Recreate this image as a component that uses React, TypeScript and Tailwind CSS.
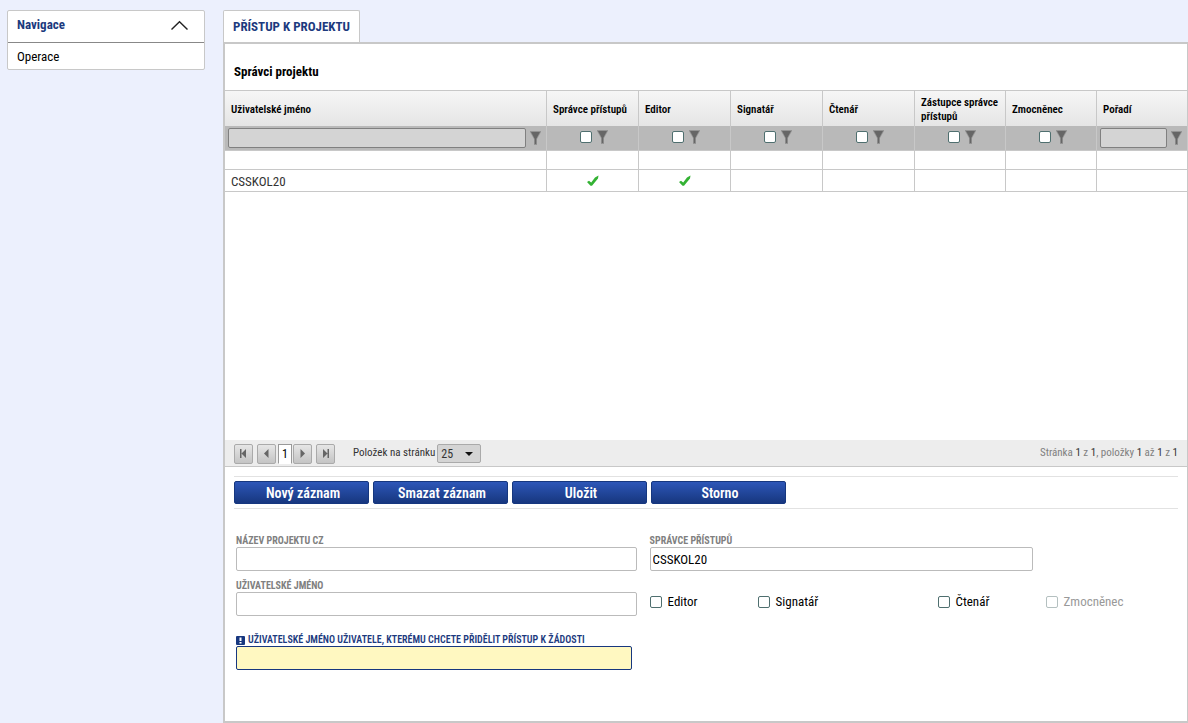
import type { ReactNode } from 'react'
import { clsx } from 'clsx'

interface Column {
  label: string
  width: string
  filter: 'text' | 'checkbox'
}

const columns: Column[] = [
  { label: 'Uživatelské jméno', width: '', filter: 'text' },
  { label: 'Správce přístupů', width: 'w-[92px]', filter: 'checkbox' },
  { label: 'Editor', width: 'w-[92px]', filter: 'checkbox' },
  { label: 'Signatář', width: 'w-[92px]', filter: 'checkbox' },
  { label: 'Čtenář', width: 'w-[92px]', filter: 'checkbox' },
  { label: 'Zástupce správce přístupů', width: 'w-[91px]', filter: 'checkbox' },
  { label: 'Zmocněnec', width: 'w-[91px]', filter: 'checkbox' },
  { label: 'Pořadí', width: 'w-[90px]', filter: 'text' },
]

const actions = ['Nový záznam', 'Smazat záznam', 'Uložit', 'Storno']

const checkboxClass =
  'block size-3 shrink-0 appearance-none rounded-[2px] border border-[#4f6f6f] bg-white checked:bg-[#1c3f94] disabled:border-[#b4c0c0]'

const fieldClass = 'block h-6 rounded-[2px] border border-[#bbb] bg-white px-[2px] text-[13px] text-black'

const labelClass = 'block text-[10px] leading-3 font-bold uppercase text-[#808080]'

function FunnelIcon() {
  return (
    <svg width="11" height="14" viewBox="0 0 11 14" aria-hidden="true">
      <path d="M0 0h11v1L7 8v6H4V8L0 1z" fill="#949494" />
      <path d="M1 1h9L6.200 8V13H4.800V8z" fill="#666" />
    </svg>
  )
}

function CheckIcon() {
  return (
    <svg width="12" height="12" viewBox="0 0 12 12" className="mx-auto" role="img" aria-label="Ano">
      <path d="M0 7L2 5.800L4.200 7.500L8 2.500L11.500 0.500L11 3.500L5 10.800H3.500z" fill="#33b233" />
    </svg>
  )
}

function PagerButton({ label, children }: { label: string; children: ReactNode }) {
  return (
    <button
      type="button"
      aria-label={label}
      className="flex h-5 w-[19px] items-center justify-center rounded-[2px] border border-[#aaa] bg-linear-to-b from-[#e6e6e6] to-[#c4c4c4]"
    >
      <svg width="9" height="9" viewBox="0 0 9 9" fill="#666" aria-hidden="true">
        {children}
      </svg>
    </button>
  )
}

function CheckField({ label, className, disabled }: { label: string; className?: string; disabled?: boolean }) {
  return (
    <label className={clsx('flex items-center gap-1.5 text-[13px]', disabled && 'text-[#999]', className)}>
      <input type="checkbox" disabled={disabled} className={checkboxClass} />
      {label}
    </label>
  )
}

function Sidebar() {
  return (
    <nav className="mt-2.5 ml-[7px] w-[198px] shrink-0 self-start rounded-[2px] border border-[#c8c8c8] bg-white text-[13px]">
      <button
        type="button"
        className="flex h-8 w-full items-center justify-between border-b border-[#888] pr-4 pb-1 pl-[9px] font-bold text-[#1c3a7e]"
      >
        Navigace
        <svg width="17" height="10" viewBox="0 0 17 10" fill="none" stroke="#222" strokeWidth="1.4" aria-hidden="true">
          <path d="M0.500 9.500L8.500 1.800L16.500 9.500" />
        </svg>
      </button>
      <a href="#operace" className="flex h-[26px] items-center px-[9px] pt-px text-black">
        Operace
      </a>
    </nav>
  )
}

function ManagersTable() {
  return (
    <table className="w-full table-fixed border-separate border-spacing-0 text-left">
      <thead>
        <tr className="h-9 bg-linear-to-b from-[#f7f7f7] to-[#e5e5e5]">
          {columns.map((col) => (
            <th
              key={col.label}
              scope="col"
              className={clsx(
                'border-t border-r border-[#c8c8c8] pt-0.5 pr-0 pb-0 pl-1.5 text-[11px] leading-[14px] font-semibold text-black last:border-r-0',
                col.width,
              )}
            >
              {col.label}
            </th>
          ))}
        </tr>
        <tr className="h-[25px] bg-[#b9b9b9]">
          {columns.map((col) => (
            <td key={col.label} className="border-r border-b border-[#c8c8c8] p-0 last:border-r-0">
              {col.filter === 'text' ? (
                <div className="flex items-center gap-1 pr-[5px] pl-[3px]">
                  <input
                    type="text"
                    aria-label={`Filtr ${col.label}`}
                    className="h-5 min-w-0 flex-1 rounded-[2px] border border-[#808080] bg-[#d4d4d4] px-1 text-[13px]"
                  />
                  <button type="button" aria-label={`Filtrovat ${col.label}`}>
                    <FunnelIcon />
                  </button>
                </div>
              ) : (
                <div className="flex items-center justify-center gap-[5px] pb-0.5 pl-[3px]">
                  <input type="checkbox" aria-label={`Filtr ${col.label}`} className={checkboxClass} />
                  <button type="button" aria-label={`Filtrovat ${col.label}`}>
                    <FunnelIcon />
                  </button>
                </div>
              )}
            </td>
          ))}
        </tr>
      </thead>
      <tbody className="text-[13px] text-[#333]">
        <tr className="h-[19px]">
          {columns.map((col) => (
            <td key={col.label} className="border-r border-b border-[#c8c8c8] last:border-r-0" />
          ))}
        </tr>
        <tr className="h-[22px]">
          {columns.map((col, i) => (
            <td key={col.label} className="border-r border-b border-[#c8c8c8] p-0 leading-4 last:border-r-0">
              {i === 0 && <span className="block pt-0.5 pl-1.5">CSSKOL20</span>}
              {(i === 1 || i === 2) && <CheckIcon />}
            </td>
          ))}
        </tr>
      </tbody>
    </table>
  )
}

function Pager() {
  return (
    <div className="flex h-[27px] items-center border-b border-[#c8c8c8] bg-[#ededed] px-[9px] text-[11px] text-[#333]">
      <div className="flex items-center gap-1 pt-px">
        <PagerButton label="První stránka">
          <path d="M1 0h1.500v9H1zM7 0v9L2.500 4.500z" />
        </PagerButton>
        <PagerButton label="Předchozí stránka">
          <path d="M6.500 0v9L2 4.500z" />
        </PagerButton>
        <div className="-mr-[3px] -ml-0.5 flex">
          <button type="button" className="h-5 w-[14px] border border-[#999] border-b-white bg-white text-[12px] text-black">
            1
          </button>
        </div>
        <PagerButton label="Další stránka">
          <path d="M2.500 0v9L7 4.500z" />
        </PagerButton>
        <PagerButton label="Poslední stránka">
          <path d="M2 0v9L6.500 4.500zM6.500 0H8v9H6.500z" />
        </PagerButton>
      </div>
      <label htmlFor="page-size" className="ml-[18px] pt-px">
        Položek na stránku
      </label>
      <div className="relative ml-0.5">
        <select
          id="page-size"
          defaultValue="25"
          className="block h-[19px] w-11 appearance-none rounded-[2px] border border-[#aaa] bg-[#d4d4d4] pl-[3px] text-[12px]"
        >
          <option>10</option>
          <option>25</option>
          <option>50</option>
        </select>
        <svg width="8" height="4" viewBox="0 0 8 4" className="pointer-events-none absolute top-2 right-2" aria-hidden="true">
          <path d="M0 0h8L4 4z" fill="#111" />
        </svg>
      </div>
      <p className="ml-auto pt-px text-[#808080]">
        Stránka <b className="font-normal text-[#333]">1</b> z <b className="font-normal text-[#333]">1</b>, položky{' '}
        <b className="font-normal text-[#333]">1</b> až <b className="font-normal text-[#333]">1</b> z{' '}
        <b className="font-normal text-[#333]">1</b>
      </p>
    </div>
  )
}

function DetailForm() {
  return (
    <form className="px-[9px] pt-[9px] pb-[51px]">
      <div className="flex h-[33px] items-center gap-1 border-y border-[#e2e2e2]">
        {actions.map((action) => (
          <button
            key={action}
            type="button"
            className="h-[23px] w-[135px] rounded-[2px] border border-[#16377f] bg-linear-to-b from-[#2d56b8] to-[#17377f] pl-[3px] text-[14px] leading-5 font-semibold text-white"
          >
            {action}
          </button>
        ))}
      </div>

      <div className="mt-[26px] grid grid-cols-[401fr_529fr] gap-x-[13px] pl-0.5">
        <div>
          <label htmlFor="project-name" className={labelClass}>
            Název projektu CZ
          </label>
          <input id="project-name" type="text" className={clsx(fieldClass, 'w-full')} />
          <label htmlFor="user-name" className={clsx(labelClass, 'mt-[9px]')}>
            Uživatelské jméno
          </label>
          <input id="user-name" type="text" className={clsx(fieldClass, 'w-full')} />
          <label
            htmlFor="new-user"
            className="mt-[18px] flex items-center gap-[3px] text-[10px] leading-3 font-semibold whitespace-nowrap text-[#1c3a7e] uppercase"
          >
            <svg width="9" height="9" viewBox="0 0 9 9" aria-hidden="true">
              <rect width="9" height="9" rx="1" fill="#17377f" />
              <path d="M3.500 1.500h2v3.500h-2zM3.500 6h2v1.500h-2z" fill="#fff" />
            </svg>
            Uživatelské jméno uživatele, kterému chcete přidělit přístup k žádosti
          </label>
          <input
            id="new-user"
            type="text"
            required
            className="block h-6 w-[396px] max-w-full rounded-[2px] border border-[#17377f] bg-[#fff8c1] px-[2px] text-[13px]"
          />
        </div>

        <div>
          <label htmlFor="access-admin" className={labelClass}>
            Správce přístupů
          </label>
          <input
            id="access-admin"
            type="text"
            defaultValue="CSSKOL20"
            className={clsx(fieldClass, 'w-[383px] max-w-full')}
          />
          <div className="mt-[21px] flex">
            <CheckField label="Editor" className="w-[108px]" />
            <CheckField label="Signatář" className="w-[180px]" />
            <CheckField label="Čtenář" className="w-[108px]" />
            <CheckField label="Zmocněnec" disabled />
          </div>
        </div>
      </div>
    </form>
  )
}

export default function App() {
  return (
    <div className="flex min-h-screen bg-[#ecf0fd] font-['Roboto_Condensed','Liberation_Sans_Narrow',Roboto,sans-serif] text-black">
      <Sidebar />
      <main className="ml-[18px] flex min-w-0 flex-1 flex-col pt-2.5">
        <div role="tablist" className="flex">
          <button
            type="button"
            role="tab"
            aria-selected="true"
            className="h-8 rounded-t-[2px] border border-b-0 border-[#c8c8c8] bg-white px-[9px] text-[13px] font-bold whitespace-nowrap text-[#1c3a7e]"
          >
            PŘÍSTUP K PROJEKTU
          </button>
        </div>
        <div className="flex flex-1 flex-col border-y-2 border-r border-l-2 border-[#c8c8c8] bg-white">
          <h1 className="px-[9px] pt-[18px] pb-2 text-[13px] leading-5 font-bold">Správci projektu</h1>
          <div className="flex-1">
            <ManagersTable />
          </div>
          <Pager />
          <DetailForm />
        </div>
      </main>
    </div>
  )
}
